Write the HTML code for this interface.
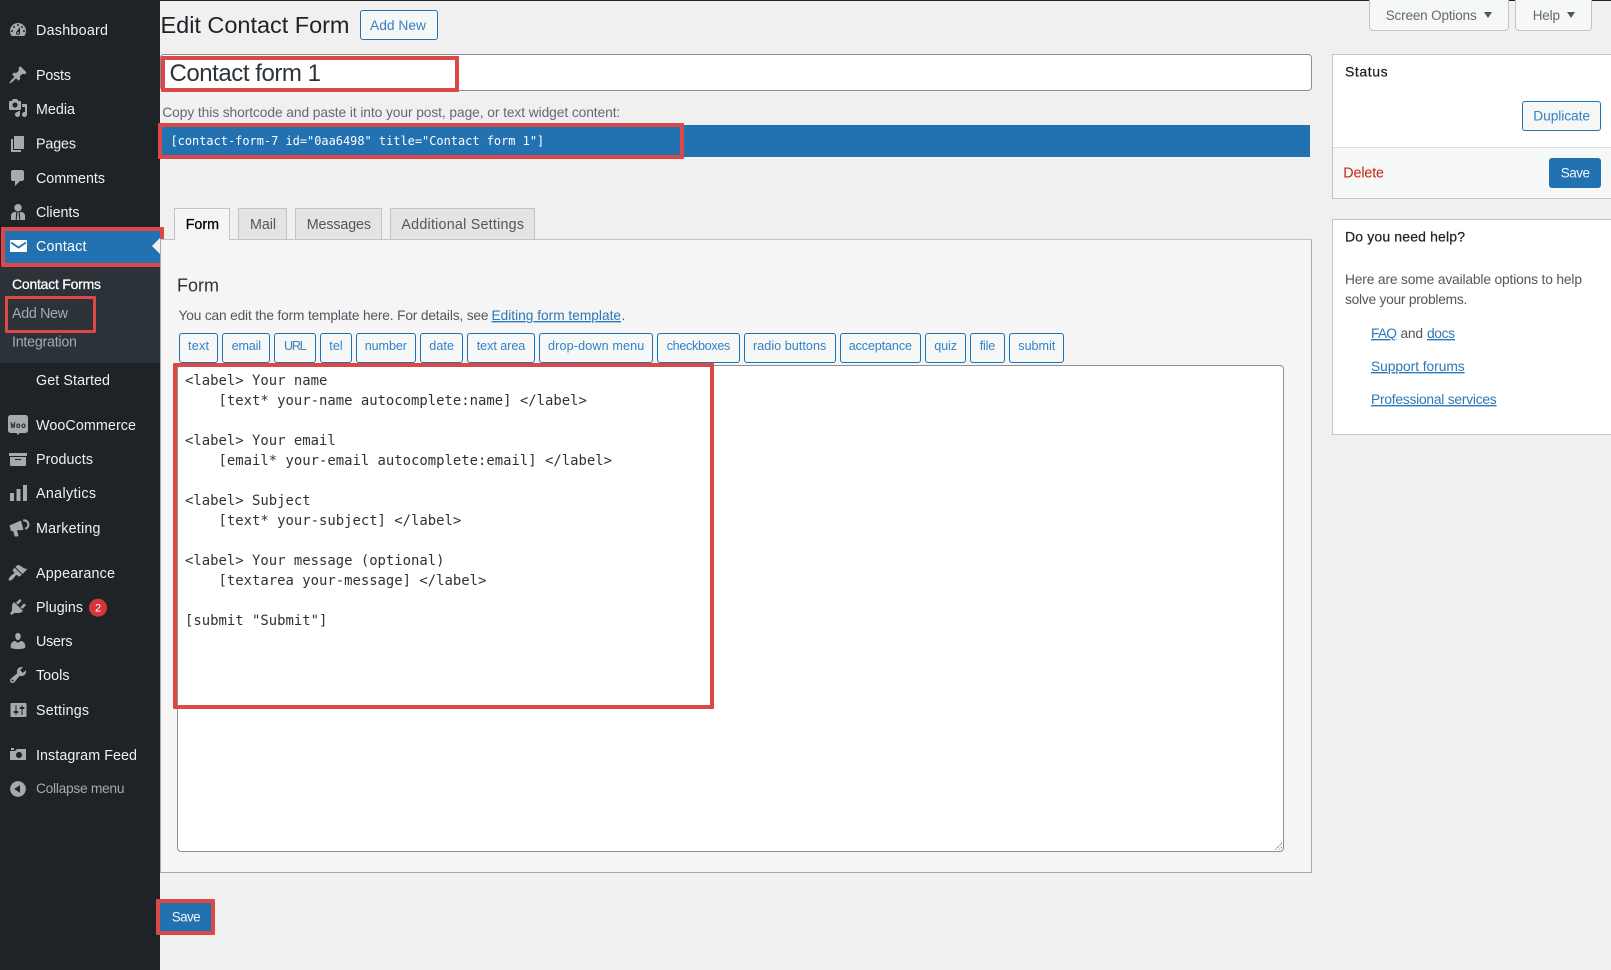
<!DOCTYPE html>
<html lang="en">
<head>
<meta charset="utf-8">
<title>Edit Contact Form</title>
<style>
html,body{margin:0;padding:0;width:1611px;height:970px;overflow:hidden;background:#f0f0f1;}
*{box-sizing:border-box;}
.b{position:absolute;}
.btn{position:absolute;top:333px;height:30px;border:1px solid #2271b1;border-radius:3px;background:#f6f7f7;}
.red{position:absolute;border:4px solid #da4848;border-radius:1px;}
svg{position:absolute;left:0;top:0;}
text{font-family:"Liberation Sans",sans-serif;font-size:14.3px;white-space:pre;}
.m text{fill:#f0f0f1;}
.ic path,.ic circle,.ic rect{fill:#a7aaad;}
.mono{font-family:"DejaVu Sans Mono",monospace;font-size:13.92px;fill:#2c3338;}
.bt{fill:#3582c4;font-size:12.6px;}
.bd{stroke-width:.25px;}
.g{fill:#50575e;}
.l{fill:#2b78b8;text-decoration:underline;}
</style>
</head>
<body>
<!-- sidebar -->
<div class="b" style="left:0;top:0;width:160px;height:970px;background:#1d2327"></div>
<div class="b" style="left:0;top:0;width:1611px;height:1px;background:#1d2327"></div>
<div class="b" style="left:0;top:267px;width:160px;height:96px;background:#2c3338"></div>
<div class="b" style="left:5px;top:231px;width:155px;height:32px;background:#2271b1"></div>
<div class="red" style="left:1px;top:227px;width:163px;height:40px"></div>
<div class="red" style="left:5px;top:296px;width:91px;height:37px;border-width:3.5px"></div>

<!-- top -->
<div class="b" style="left:359.5px;top:10px;width:78px;height:30px;border:1px solid #2271b1;border-radius:3px;background:#f6f7f7"></div>
<div class="b" style="left:1369px;top:-2px;width:140px;height:33px;border:1px solid #c3c4c7;border-radius:0 0 4px 4px;background:#f6f7f7"></div>
<div class="b" style="left:1515px;top:-2px;width:77px;height:33px;border:1px solid #c3c4c7;border-radius:0 0 4px 4px;background:#f6f7f7"></div>

<!-- title -->
<div class="b" style="left:160px;top:54px;width:1152px;height:37px;background:#fff;border:1px solid #8c8f94;border-radius:4px"></div>
<div class="red" style="left:161px;top:56px;width:298px;height:36px"></div>
<div class="b" style="left:160px;top:125px;width:1150px;height:32px;background:#2271b1"></div>
<div class="red" style="left:158px;top:123px;width:526px;height:36px"></div>

<!-- tabs + panel -->
<div class="b" style="left:160px;top:239px;width:1152px;height:634px;background:#f5f5f5;border:1px solid #a7aaad;border-top-color:#c3c4c7"></div>
<div class="b" style="left:174px;top:208px;width:56px;height:32px;background:#f5f5f5;border:1px solid #c3c4c7;border-bottom:0"></div>
<div class="b" style="left:238px;top:208px;width:49px;height:31px;background:#e4e4e4;border:1px solid #c3c4c7;border-bottom:0"></div>
<div class="b" style="left:295px;top:208px;width:87px;height:31px;background:#e4e4e4;border:1px solid #c3c4c7;border-bottom:0"></div>
<div class="b" style="left:390px;top:208px;width:145px;height:31px;background:#e4e4e4;border:1px solid #c3c4c7;border-bottom:0"></div>

<!-- tag buttons -->
<div class="btn" style="left:179px;width:39px"></div>
<div class="btn" style="left:222px;width:48px"></div>
<div class="btn" style="left:274px;width:42px"></div>
<div class="btn" style="left:320px;width:32px"></div>
<div class="btn" style="left:356px;width:60px"></div>
<div class="btn" style="left:420px;width:43px"></div>
<div class="btn" style="left:467px;width:68px"></div>
<div class="btn" style="left:539px;width:114px"></div>
<div class="btn" style="left:657px;width:83px"></div>
<div class="btn" style="left:744px;width:92px"></div>
<div class="btn" style="left:840px;width:81px"></div>
<div class="btn" style="left:925px;width:41px"></div>
<div class="btn" style="left:970px;width:35px"></div>
<div class="btn" style="left:1009px;width:55px"></div>

<!-- textarea -->
<div class="b" style="left:177px;top:365px;width:1107px;height:487px;background:#fff;border:1px solid #8c8f94;border-radius:4px"></div>
<div class="red" style="left:173px;top:363px;width:541px;height:346px"></div>

<!-- bottom save -->
<div class="b" style="left:160px;top:903px;width:51px;height:28px;background:#2271b1"></div>
<div class="red" style="left:156px;top:899px;width:59px;height:36px"></div>

<!-- status box -->
<div class="b" style="left:1332px;top:54px;width:290px;height:145px;background:#fff;border:1px solid #c3c4c7"></div>
<div class="b" style="left:1333px;top:147px;width:278px;height:51px;background:#f6f7f7;border-top:1px solid #dcdcde"></div>
<div class="b" style="left:1522px;top:101px;width:79px;height:30px;border:1px solid #2271b1;border-radius:3px;background:#f6f7f7"></div>
<div class="b" style="left:1549px;top:158px;width:52px;height:30px;border-radius:3px;background:#2271b1"></div>

<!-- help box -->
<div class="b" style="left:1332px;top:219px;width:290px;height:216px;background:#fff;border:1px solid #c3c4c7"></div>

<svg width="1611" height="970" viewBox="0 0 1611 970" xmlns="http://www.w3.org/2000/svg">
  <!-- menu arrow -->
  <path d="M160 238l-8 8 8 8z" fill="#f0f0f1"/>

  <!-- icons -->
  <g class="ic">
    <path transform="translate(8 20)" d="M3.76 16h12.48c1.1-1.37 1.76-3.11 1.76-5 0-4.42-3.58-8-8-8s-8 3.58-8 8c0 1.89.66 3.63 1.76 5zM10 4c.55 0 1 .45 1 1s-.45 1-1 1-1-.45-1-1 .45-1 1-1zM6 6c.55 0 1 .45 1 1s-.45 1-1 1-1-.45-1-1 .45-1 1-1zm8 0c.55 0 1 .45 1 1s-.45 1-1 1-1-.45-1-1 .45-1 1-1zm-5.37 5.55L12 7v6c0 1.1-.9 2-2 2s-2-.9-2-2c0-.57.24-1.08.63-1.45zM4 10c.55 0 1 .45 1 1s-.45 1-1 1-1-.45-1-1 .45-1 1-1zm12 0c.55 0 1 .45 1 1s-.45 1-1 1-1-.45-1-1 .45-1 1-1zm-5 3c0-.55-.45-1-1-1s-1 .45-1 1 .45 1 1 1 1-.45 1-1z"/>
    <path transform="translate(8 65)" d="M10.44 3.02l1.82-1.82 6.36 6.35-1.83 1.82c-1.05-.68-2.48-.57-3.41.36l-.75.75c-.92.93-1.04 2.35-.35 3.41l-1.83 1.82-2.41-2.41-2.8 2.79c-.42.42-3.38 2.71-3.8 2.29s1.86-3.39 2.28-3.81l2.79-2.79L4.1 9.36l1.83-1.82c1.05.69 2.48.57 3.4-.36l.75-.75c.93-.92 1.05-2.35.36-3.41z"/>
    <path transform="translate(8 98)" d="M13 11V4c0-.55-.45-1-1-1h-1.67L9 1H5L3.67 3H2c-.55 0-1 .45-1 1v7c0 .55.45 1 1 1h10c.55 0 1-.45 1-1zM7 4.5c1.38 0 2.5 1.12 2.5 2.5S8.38 9.5 7 9.5 4.5 8.38 4.5 7 5.62 4.5 7 4.5zM14 6h5v10.5c0 1.38-1.12 2.5-2.5 2.5S14 17.88 14 16.5s1.12-2.5 2.5-2.5c.17 0 .34.02.5.05V9h-3V6zm-4 8.05V13h2v3.5c0 1.38-1.12 2.5-2.5 2.5S7 17.88 7 16.5 8.12 14 9.5 14c.17 0 .34.02.5.05z" fill-rule="evenodd"/>
    <path transform="translate(8 134)" d="M6 15V2h10v13H6zm-1 1h8v2H3V5h2v11z"/>
    <path transform="translate(8 168)" d="M5 2h9c1.100 0 2 .9 2 2v7c0 1.100-.9 2-2 2h-2l-5 5v-5H5c-1.100 0-2-.9-2-2V4c0-1.100.9-2 2-2z"/>
    <g transform="translate(8 202)">
      <circle cx="10" cy="5.700" r="3.700"/>
      <path d="M3 18v-4.500c0-2 1.800-3.500 4-3.500h1.200l-.5 8zM17 18v-4.500c0-2-1.800-3.500-4-3.500h-1.200l.5 8zM9 10.500h2l-.3 1.500.6 6H8.700l.6-6z"/>
    </g>
    <g transform="translate(8 415)">
      <path d="M2.500 0h15A2.500 2.500 0 0 1 20 2.500v13a2.500 2.500 0 0 1-2.500 2.500H12l-2.500 2-.8-2H2.500A2.500 2.500 0 0 1 0 15.500v-13A2.500 2.500 0 0 1 2.500 0z"/>
    </g>
    <path transform="translate(8 449)" d="M19 4v3H1V4h18zM2 8h16v8c0 .55-.45 1-1 1H3c-.55 0-1-.45-1-1V8zm5 2v1h6v-1H7z" fill-rule="evenodd"/>
    <rect x="10" y="493" width="4" height="8"/>
    <rect x="16.500" y="489" width="4" height="12"/>
    <rect x="23" y="485" width="4" height="16"/>
    <g transform="translate(8 518)">
      <path d="M1.500 7.500L13 2.500l2.500 9.500L9 12.300l1.500 5.200-1 1H6.800L5 12.800l-2 .4z"/>
      <path d="M15 1.600a5.200 5.200 0 0 1 2.600 10.100l-.7-1.900a3.200 3.200 0 0 0-1.500-6.300z"/>
    </g>
    <path transform="translate(8 563)" d="M14.480 11.060L7.410 3.990l1.500-1.500c.5-.56 2.300-.47 3.510.32 1.210.8 1.430 1.280 2.910 2.100 1.180.64 2.450 1.260 4.450.85zm-.71.71L6.700 4.700 4.930 6.470c-.39.39-.39 1.020 0 1.410l1.060 1.060c.39.39.39 1.030 0 1.420-.6.6-1.430 1.110-2.210 1.690-.35.26-.7.53-1.010.84-.39.39-3.060 3.160-1.820 4.400 1.240 1.240 4.010-1.430 4.400-1.820.31-.31.58-.66.84-1.010.58-.78 1.090-1.610 1.690-2.210.39-.39 1.030-.39 1.420 0l1.060 1.060c.39.39 1.020.39 1.410 0z"/>
    <path transform="translate(8 597)" d="M13.110 4.360L9.870 7.600 8 5.730l3.240-3.240c.35-.34 1.050-.2 1.560.32.52.51.66 1.210.31 1.550zm-8 1.770l.91-1.120 9.010 9.010-1.190.84c-.71.71-2.630 1.160-3.820 1.160H6.140L4.900 17.260c-.59.59-1.540.59-2.120 0-.59-.58-.59-1.530 0-2.120l1.240-1.240v-3.880c0-1.130.4-3.190 1.090-3.890zm7.260 3.970l3.240-3.240c.34-.35 1.040-.21 1.550.31.52.51.66 1.210.31 1.550l-3.240 3.250z"/>
    <path transform="translate(8 631)" d="M10 9.250c-2.270 0-2.730-3.440-2.730-3.440C7 4.020 7.820 2 9.970 2c2.160 0 2.980 2.020 2.710 3.810 0 0-.41 3.440-2.680 3.440zm0 2.570L12.720 10c2.390 0 4.520 2.330 4.520 4.530v2.490s-3.650 1.130-7.240 1.130c-3.650 0-7.240-1.130-7.240-1.130v-2.490c0-2.250 1.940-4.480 4.470-4.480z"/>
    <path transform="translate(8 665)" d="M16.680 9.770c-1.340 1.340-3.300 1.670-4.950.99l-5.410 6.520c-.99.99-2.590.99-3.580 0s-.99-2.590 0-3.570l6.520-5.420c-.68-1.650-.35-3.610.99-4.950 1.280-1.280 3.120-1.620 4.720-1.060l-2.890 2.890 2.820 2.820 2.860-2.870c.53 1.580.18 3.390-1.080 4.670zM3.810 16.210c.4.39 1.040.39 1.430 0 .4-.4.4-1.040 0-1.430-.39-.4-1.030-.4-1.430 0-.39.39-.39 1.030 0 1.430z"/>
    <path transform="translate(8.500 700)" d="M18 16V4c0-.55-.45-1-1-1H3c-.55 0-1 .45-1 1v12c0 .55.45 1 1 1h14c.55 0 1-.45 1-1zM8 11h1c.55 0 1 .45 1 1s-.45 1-1 1H8v1.500c0 .28-.22.5-.5.5s-.5-.22-.5-.5V13H6c-.55 0-1-.45-1-1s.45-1 1-1h1V5.500c0-.28.22-.5.5-.5s.5.22.5.5V11zm5-2h-1c-.55 0-1-.45-1-1s.45-1 1-1h1V5.500c0-.28.22-.5.5-.5s.5.22.5.5V7h1c.55 0 1 .45 1 1s-.45 1-1 1h-1v5.500c0 .28-.22.5-.5.5s-.5-.22-.5-.5V9z"/>
    <path transform="translate(8 745)" d="M6 5V3H3v2h3zm12 10V4H9L7 6H2v9h16zm-7-8c1.660 0 3 1.340 3 3s-1.340 3-3 3-3-1.340-3-3 1.340-3 3-3z" fill-rule="evenodd"/>
    <path transform="translate(8 779)" d="M10 2.160c4.330 0 7.840 3.510 7.840 7.840s-3.510 7.840-7.840 7.840S2.160 14.330 2.160 10 5.710 2.160 10 2.160zm2 11.720V6.120L6.180 9.970z" fill-rule="evenodd"/>
  </g>

  <!-- contact envelope -->
  <path d="M11 240h15c.6 0 1 .4 1 1v10c0 .6-.4 1-1 1H11c-.6 0-1-.4-1-1v-10c0-.6.4-1 1-1z" fill="#fff"/>
  <path d="M11 242.500l7.500 5 7.500-5" fill="none" stroke="#2271b1" stroke-width="1.800"/>
  <text x="10.500" y="428" textLength="15.500" style="font-family:'DejaVu Sans Mono',monospace;font-size:8px;font-weight:bold;fill:#1d2327">Woo</text>

  <!-- sidebar labels -->
  <g class="m">
    <text x="36" y="35" textLength="72">Dashboard</text>
    <text x="36" y="80" textLength="35">Posts</text>
    <text x="36" y="114" textLength="39">Media</text>
    <text x="36" y="148.500" textLength="40">Pages</text>
    <text x="36" y="183" textLength="69">Comments</text>
    <text x="36" y="217" textLength="43.500">Clients</text>
    <text x="36" y="251" textLength="50.500" style="fill:#fff">Contact</text>
    <text x="12" y="289" textLength="89" class="bd" style="fill:#fff;stroke:#fff;font-size:14px">Contact Forms</text>
    <text x="12" y="318" textLength="56" style="fill:#a7aaad">Add New</text>
    <text x="12" y="346.500" textLength="65" style="fill:#a7aaad">Integration</text>
    <text x="36" y="385" textLength="74">Get Started</text>
    <text x="36" y="430" textLength="100">WooCommerce</text>
    <text x="36" y="464" textLength="57">Products</text>
    <text x="36" y="498" textLength="60">Analytics</text>
    <text x="36" y="532.800" textLength="64.500">Marketing</text>
    <text x="36" y="578" textLength="79">Appearance</text>
    <text x="36" y="612" textLength="47">Plugins</text>
    <text x="36" y="646" textLength="36.500">Users</text>
    <text x="36" y="680" textLength="33.500">Tools</text>
    <text x="36" y="715" textLength="53">Settings</text>
    <text x="36" y="760" textLength="101">Instagram Feed</text>
    <text x="36" y="793" textLength="88.500" style="fill:#a7aaad;font-size:13.800px">Collapse menu</text>
  </g>
  <circle cx="98" cy="607.700" r="9" fill="#d63638"/>
  <text x="98" y="611.500" text-anchor="middle" style="font-size:11px;fill:#fff">2</text>

  <!-- header -->
  <text x="160.500" y="33" textLength="189" style="font-size:23.500px;fill:#1d2327">Edit Contact Form</text>
  <text x="370" y="30" textLength="56" style="fill:#3582c4;font-size:13.800px">Add New</text>
  <text x="1385.700" y="20" textLength="91" style="fill:#646970;font-size:13.500px">Screen Options</text>
  <path d="M1484 12h8l-4 6z" fill="#50575e"/>
  <text x="1532.700" y="20" textLength="27.300" style="fill:#646970;font-size:13.500px">Help</text>
  <path d="M1567 12h8l-4 6z" fill="#50575e"/>

  <!-- title -->
  <text x="169.500" y="81" textLength="151.500" style="font-size:24px;fill:#2c3338">Contact form 1</text>
  <text x="162.300" y="117" textLength="458" style="font-size:13.800px;fill:#646970">Copy this shortcode and paste it into your post, page, or text widget content:</text>
  <text x="170.500" y="145" class="mono" style="font-size:11.950px;fill:#fff">[contact-form-7 id="0aa6498" title="Contact form 1"]</text>

  <!-- tabs -->
  <text x="185.700" y="229" textLength="33.300" class="bd" style="fill:#000;stroke:#000">Form</text>
  <text x="250" y="229" textLength="26" class="g">Mail</text>
  <text x="306.700" y="229" textLength="64.300" class="g">Messages</text>
  <text x="401.400" y="229" textLength="122.600" class="g">Additional Settings</text>

  <!-- panel text -->
  <text x="177" y="291.700" textLength="42" style="font-size:18px;fill:#2c3338">Form</text>
  <text x="178.500" y="320" textLength="310" style="font-size:13.700px;fill:#50575e">You can edit the form template here. For details, see</text>
  <text x="491.500" y="320" textLength="129.500" class="l" style="font-size:13.700px">Editing form template</text>
  <text x="621.500" y="320" style="font-size:13.700px;fill:#50575e">.</text>

  <!-- button labels -->
  <text x="188" y="350" textLength="21" class="bt">text</text>
  <text x="231.700" y="350" textLength="29.300" class="bt">email</text>
  <text x="284" y="350" textLength="22.700" class="bt">URL</text>
  <text x="329.300" y="350" textLength="13.400" class="bt">tel</text>
  <text x="364.700" y="350" textLength="42.300" class="bt">number</text>
  <text x="429.300" y="350" textLength="24.700" class="bt">date</text>
  <text x="476.700" y="350" textLength="48.600" class="bt">text area</text>
  <text x="548" y="350" textLength="96.300" class="bt">drop-down menu</text>
  <text x="666.700" y="350" textLength="63.600" class="bt">checkboxes</text>
  <text x="753" y="350" textLength="73.300" class="bt">radio buttons</text>
  <text x="848.700" y="350" textLength="63.300" class="bt">acceptance</text>
  <text x="934.300" y="350" textLength="22.700" class="bt">quiz</text>
  <text x="979.700" y="350" textLength="15.600" class="bt">file</text>
  <text x="1018.300" y="350" textLength="37" class="bt">submit</text>

  <!-- textarea content -->
  <g>
    <text class="mono" x="185" y="385" xml:space="preserve">&lt;label&gt; Your name</text>
    <text class="mono" x="185" y="405" xml:space="preserve">    [text* your-name autocomplete:name] &lt;/label&gt;</text>
    <text class="mono" x="185" y="445" xml:space="preserve">&lt;label&gt; Your email</text>
    <text class="mono" x="185" y="465" xml:space="preserve">    [email* your-email autocomplete:email] &lt;/label&gt;</text>
    <text class="mono" x="185" y="505" xml:space="preserve">&lt;label&gt; Subject</text>
    <text class="mono" x="185" y="525" xml:space="preserve">    [text* your-subject] &lt;/label&gt;</text>
    <text class="mono" x="185" y="565" xml:space="preserve">&lt;label&gt; Your message (optional)</text>
    <text class="mono" x="185" y="585" xml:space="preserve">    [textarea your-message] &lt;/label&gt;</text>
    <text class="mono" x="185" y="625" xml:space="preserve">[submit "Submit"]</text>
  </g>
  <!-- resize grip -->
  <path d="M1275.500 849.500l7-7M1279.500 849.500l3-3" stroke="#50575e" stroke-width="1" stroke-dasharray="1 1" fill="none"/>

  <!-- bottom save -->
  <text x="171.700" y="921.700" textLength="29" style="fill:#f0f6fc;font-size:13.500px">Save</text>

  <!-- status -->
  <text x="1345" y="76.700" textLength="42.600" class="bd" style="fill:#1d2327;stroke:#1d2327;font-size:14px">Status</text>
  <text x="1533.300" y="120.700" textLength="56.700" style="fill:#3582c4;font-size:13.800px">Duplicate</text>
  <text x="1343.300" y="177.300" textLength="40.700" style="fill:#c5260f">Delete</text>
  <text x="1560.700" y="177.300" textLength="29.300" style="fill:#f0f6fc;font-size:13.500px">Save</text>

  <!-- help -->
  <text x="1345" y="241.700" textLength="120" class="bd" style="fill:#1d2327;stroke:#1d2327;font-size:14px">Do you need help?</text>
  <text x="1345" y="284" textLength="237" style="fill:#50575e;font-size:13.800px">Here are some available options to help</text>
  <text x="1345" y="304" textLength="122.300" style="fill:#50575e;font-size:13.800px">solve your problems.</text>
  <text x="1371" y="338" textLength="26" class="l" style="font-size:13.800px">FAQ</text>
  <text x="1400.500" y="338" textLength="22.500" style="fill:#50575e;font-size:13.800px">and</text>
  <text x="1427" y="338" textLength="28" class="l" style="font-size:13.800px">docs</text>
  <text x="1371" y="371" textLength="93.700" class="l" style="font-size:13.800px">Support forums</text>
  <text x="1371" y="404" textLength="125.700" class="l" style="font-size:13.800px">Professional services</text>
</svg>
</body>
</html>
